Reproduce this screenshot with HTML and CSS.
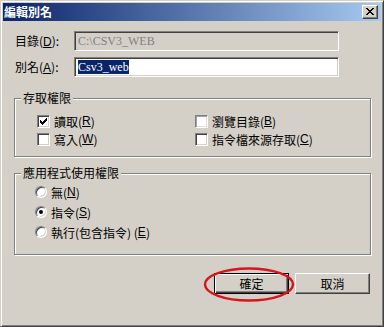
FILE: index.html
```html
<!DOCTYPE html>
<html>
<head>
    <meta charset="utf-8">
    <link rel="stylesheet" href="styles.css">
</head>
<body>
    <div class="window">
        <div class="titlebar">
            <span class="title">編輯別名</span>
            <span class="closeButton">
                <svg width="8" height="7" viewBox="0 0 8 7" shape-rendering="crispEdges">
                    <path d="M0 0h2v1h-2z M6 0h2v1h-2z M1 1h2v1h-2z M5 1h2v1h-2z M2 2h4v1h-4z M3 3h2v1h-2z M2 4h4v1h-4z M1 5h2v1h-2z M5 5h2v1h-2z M0 6h2v1h-2z M6 6h2v1h-2z" fill="#000"/>
                </svg>
            </span>
        </div>

        <div class="content">
            <!-- directory and alias -->
            <div class="fields">
                <span class="label">目錄(<u>D</u>):</span>
                <div class="textBox disabled">C:\CSV3_WEB</div>
                <span class="label">別名(<u>A</u>):</span>
                <div class="textBox"><span class="selected">Csv3_web</span></div>
            </div>

            <div class="group accessGroup">
                <span class="legend">存取權限</span>
                <div class="checkGrid">
                    <div class="option"><span class="checkBox checked"></span>讀取(<u>R</u>)</div>
                    <div class="option"><span class="checkBox faint"></span>瀏覽目錄(<u>B</u>)</div>
                    <div class="option"><span class="checkBox"></span>寫入(<u>W</u>)</div>
                    <div class="option"><span class="checkBox"></span>指令檔來源存取(<u>C</u>)</div>
                </div>
            </div>

            <div class="group appGroup">
                <span class="legend">應用程式使用權限</span>
                <div class="radioList">
                    <div class="option"><span class="radio"></span>無(<u>N</u>)</div>
                    <div class="option"><span class="radio selectedRadio"></span>指令(<u>S</u>)</div>
                    <div class="option"><span class="radio"></span>執行(包含指令) (<u>E</u>)</div>
                </div>
            </div>

            <div class="buttons">
                <div class="pushButton defaultButton">確定</div>
                <div class="pushButton">取消</div>
            </div>
        </div>

        <!-- red marker drawn over the OK button -->
        <svg class="marker" width="100" height="40" viewBox="0 0 100 40">
            <ellipse cx="49" cy="19.5" rx="44" ry="16" fill="none" stroke="#d8141e" stroke-width="2.4"/>
        </svg>
    </div>
</body>
</html>
```

FILE: styles.css
```css
body {
    margin: 0;
    background-color: #d4d0c8;
    font-family: "Noto Sans CJK TC", sans-serif;
    font-size: 12px;
    color: black;
}

.window {
    position: relative;
    width: 384px;
    height: 327px;
    box-sizing: border-box;
    padding: 2px;
    border: 1px solid;
    border-color: #d4d0c8 #404040 #404040 #d4d0c8;
    box-shadow: inset 1px 1px #fff, inset -1px -1px #808080;
    background-color: #d4d0c8;
}

.titlebar {
    height: 18px;
    display: flex;
    align-items: center;
    justify-content: space-between;
    padding: 0 3px 0 1px;
    background: linear-gradient(to right, #0a246a, #a6caf0);
    color: white;
}

.title {
    font-weight: bold;
    font-size: 12px;
    line-height: 14px;
}

.closeButton {
    width: 16px;
    height: 14px;
    box-sizing: border-box;
    display: flex;
    align-items: center;
    justify-content: center;
    padding: 0 1px 1px 0;
    background-color: #d4d0c8;
    border: 1px solid;
    border-color: #fff #404040 #404040 #fff;
    box-shadow: inset -1px -1px #808080;
}

.content {
    padding: 10px 10px 0 11px;
}

.fields {
    display: grid;
    grid-template-columns: 60px 265px;
    grid-auto-rows: 20px;
    row-gap: 6px;
    align-items: center;
}

.label {
    padding-left: 1px;
    line-height: 14px;
}

.label u, .option u {
    font-family: "Liberation Sans", sans-serif;
}

.textBox {
    height: 20px;
    box-sizing: border-box;
    padding: 2px 2px 0 3px;
    background-color: white;
    border: 1px solid;
    border-color: #808080 #fff #fff #808080;
    box-shadow: inset 1px 1px #404040, inset -1px -1px #d4d0c8;
    font-family: "Liberation Serif", serif;
    font-size: 12px;
    line-height: 14px;
    white-space: nowrap;
}

.textBox.disabled {
    background-color: #d4d0c8;
    color: #808080;
}

.selected {
    background-color: #0a246a;
    color: white;
}

.group {
    position: relative;
    border: 1px solid #808080;
    box-shadow: inset 1px 1px #fff, 1px 1px #fff;
}

.legend {
    position: absolute;
    top: -8px;
    left: 6px;
    padding: 0 2px;
    background-color: #d4d0c8;
    line-height: 14px;
}

.accessGroup {
    margin-top: 21px;
    height: 59px;
    box-sizing: border-box;
    padding: 16px 0 0 22px;
}

.checkGrid {
    display: grid;
    grid-template-columns: 158px auto;
    row-gap: 5px;
}

.option {
    display: flex;
    align-items: center;
    height: 13px;
    line-height: 13px;
    white-space: nowrap;
}

.checkBox {
    position: relative;
    width: 13px;
    height: 13px;
    box-sizing: border-box;
    margin-right: 4px;
    background-color: white;
    border: 1px solid;
    border-color: #808080 #fff #fff #808080;
    box-shadow: inset 1px 1px #404040, inset -1px -1px #d4d0c8;
}

.checkBox.faint {
    box-shadow: inset 1px 1px #a0a0a0, inset -1px -1px #e4e0d8;
}

.checkBox.checked::after {
    content: "";
    position: absolute;
    left: 2px;
    top: 2px;
    width: 7px;
    height: 7px;
    background: url("data:image/svg+xml;utf8,<svg xmlns='http://www.w3.org/2000/svg' width='7' height='7' shape-rendering='crispEdges'><path d='M6 0h1v1h-1z M5 1h2v1h-2z M0 2h1v1h-1z M4 2h3v1h-3z M0 3h2v1h-2z M3 3h3v1h-3z M0 4h5v1h-5z M1 5h3v1h-3z M2 6h1v1h-1z' fill='black'/></svg>");
}

.appGroup {
    margin-top: 16px;
    height: 82px;
    box-sizing: border-box;
    padding: 12px 0 0 20px;
}

.radioList {
    display: flex;
    flex-direction: column;
    gap: 8px;
}

.radioList .option {
    height: 12px;
}

.radio {
    position: relative;
    width: 12px;
    height: 12px;
    box-sizing: border-box;
    margin-right: 4px;
    border-radius: 50%;
    background-color: white;
    border: 1px solid;
    border-color: #808080 #fff #fff #808080;
    box-shadow: inset 1px 1px #404040, inset -1px -1px #d4d0c8;
}

.selectedRadio::after {
    content: "";
    position: absolute;
    left: 3px;
    top: 3px;
    width: 4px;
    height: 4px;
    border-radius: 50%;
    background-color: black;
}

.buttons {
    display: flex;
    justify-content: flex-end;
    gap: 6px;
    margin-top: 18px;
    padding-right: 1px;
}

.pushButton {
    width: 75px;
    height: 21px;
    box-sizing: border-box;
    display: flex;
    align-items: center;
    justify-content: center;
    background-color: #d4d0c8;
    border: 1px solid;
    border-color: #fff #404040 #404040 #fff;
    box-shadow: inset -1px -1px #808080;
    line-height: 14px;
}

.defaultButton {
    border-color: #000;
    box-shadow: inset 1px 1px #fff, inset -1px -1px #404040, inset -2px -2px #808080;
}

.marker {
    position: absolute;
    left: 199px;
    top: 264px;
}
```
